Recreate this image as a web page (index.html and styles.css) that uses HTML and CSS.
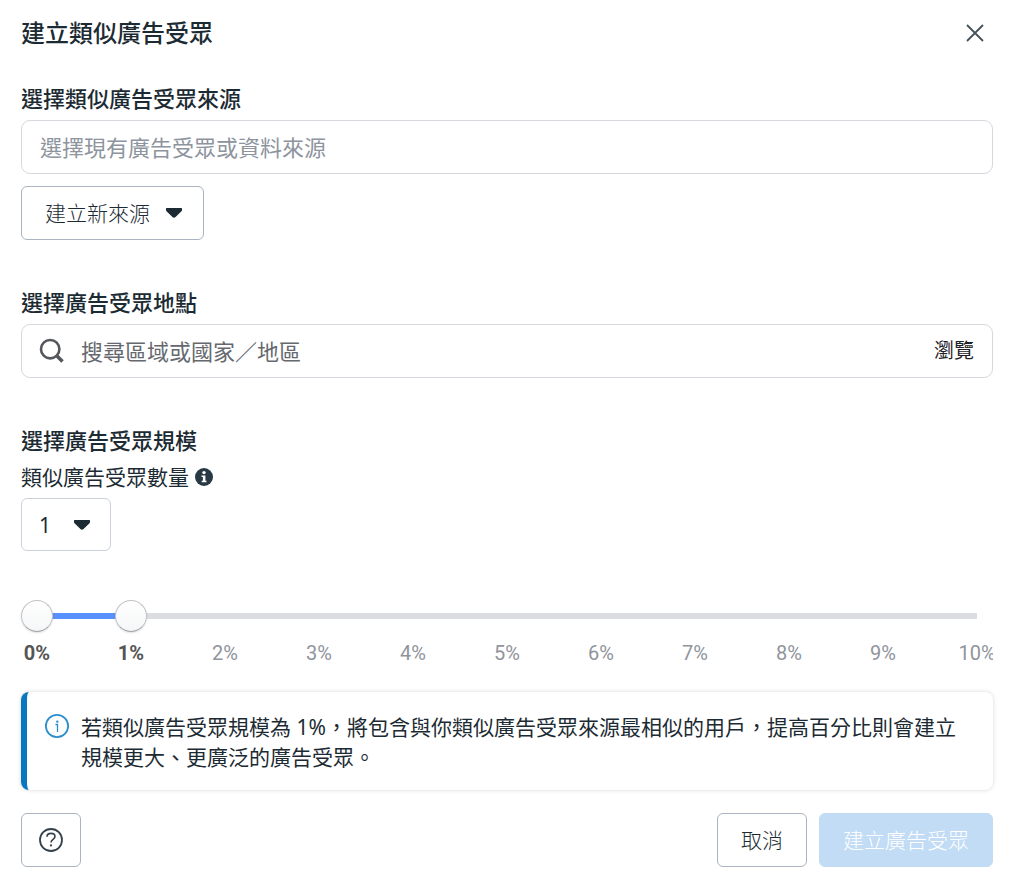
FILE: index.html
```html
<!DOCTYPE html>
<html lang="zh-Hant">
<head>
    <meta charset="UTF-8">
    <meta name="viewport" content="width=device-width, initial-scale=1.0">
    <title>建立類似廣告受眾</title>
    <link rel="stylesheet" href="styles.css">
</head>
<body>
    <form class="dialog">
        <header class="dialog-header">
            <h1>建立類似廣告受眾</h1>
            <button type="button" class="close-button" aria-label="關閉">
                <svg width="20" height="20" viewBox="0 0 20 20" fill="none" stroke="currentColor" stroke-width="1.8">
                    <path d="M2 2l16 16M18 2L2 18"/>
                </svg>
            </button>
        </header>

        <main>
            <section class="form-section">
                <h2><label for="source">選擇類似廣告受眾來源</label></h2>
                <div class="field">
                    <input type="text" id="source" name="source" placeholder="選擇現有廣告受眾或資料來源">
                </div>
                <button type="button" class="button source-button">
                    建立新來源
                    <svg class="caret" width="16" height="10" viewBox="0 0 16 10" fill="currentColor">
                        <path d="M.8 0h14.4c.6 0 .8.4.8 1v1c0 .7-.3 1.2-.8 1.6L9.6 9c-.9.9-2.3.9-3.2 0L.8 3.6C.3 3.2 0 2.7 0 2V1c0-.6.2-1 .8-1z"/>
                    </svg>
                </button>
            </section>

            <section class="form-section">
                <h2><label for="location">選擇廣告受眾地點</label></h2>
                <div class="field search-field">
                    <svg width="26" height="26" viewBox="0 0 26 26" fill="none" stroke="currentColor">
                        <circle cx="11.2" cy="11.2" r="9.2" stroke-width="2.6"/>
                        <path d="M17.5 17.5l6 6" stroke-width="3.6"/>
                    </svg>
                    <input type="text" id="location" name="location" placeholder="搜尋區域或國家／地區">
                    <button type="button" class="browse-button">瀏覽</button>
                </div>
            </section>

            <section class="form-section">
                <h2>選擇廣告受眾規模</h2>
                <div class="count-label">
                    <label for="count">類似廣告受眾數量</label>
                    <svg width="18" height="18" viewBox="0 0 18 18">
                        <circle cx="9" cy="9" r="9" fill="#283943"/>
                        <circle cx="9" cy="4.6" r="1.7" fill="#fff"/>
                        <path d="M6.5 7.4h3.9v5.3h1.1v1.6H6.7v-1.6h1.2V9H6.5z" fill="#fff"/>
                    </svg>
                </div>
                <div class="count-select">
                    <select id="count" name="count">
                        <option selected>1</option>
                        <option>2</option>
                        <option>3</option>
                        <option>4</option>
                        <option>5</option>
                        <option>6</option>
                    </select>
                    <svg class="caret" width="16" height="10" viewBox="0 0 16 10" fill="currentColor">
                        <path d="M.8 0h14.4c.6 0 .8.4.8 1v1c0 .7-.3 1.2-.8 1.6L9.6 9c-.9.9-2.3.9-3.2 0L.8 3.6C.3 3.2 0 2.7 0 2V1c0-.6.2-1 .8-1z"/>
                    </svg>
                </div>

                <div class="slider">
                    <div class="slider-track">
                        <div class="slider-fill" style="width: 10%"></div>
                    </div>
                    <input type="range" min="0" max="10" value="0" aria-label="受眾規模下限">
                    <input type="range" min="0" max="10" value="1" aria-label="受眾規模上限">
                </div>
                <ul class="slider-labels">
                    <li class="active">0%</li>
                    <li class="active">1%</li>
                    <li>2%</li>
                    <li>3%</li>
                    <li>4%</li>
                    <li>5%</li>
                    <li>6%</li>
                    <li>7%</li>
                    <li>8%</li>
                    <li>9%</li>
                    <li>10%</li>
                </ul>
            </section>

            <div class="notice">
                <svg width="24" height="24" viewBox="0 0 24 24" fill="none" stroke="#2c8dcc">
                    <circle cx="12" cy="12" r="11.1" stroke-width="1.8"/>
                    <path d="M10.5 10.5h2V18" stroke-width="1.3"/>
                    <circle cx="12.3" cy="7.6" r="1.2" fill="#2c8dcc" stroke="none"/>
                </svg>
                <p>若類似廣告受眾規模為 1%，將包含與你類似廣告受眾來源最相似的用戶，提高百分比則會建立規模更大、更廣泛的廣告受眾。</p>
            </div>
        </main>

        <footer class="dialog-footer">
            <button type="button" class="button help-button" aria-label="說明">
                <svg width="24" height="24" viewBox="0 0 24 24" fill="none" stroke="currentColor">
                    <circle cx="12" cy="12" r="11" stroke-width="1.8"/>
                    <path d="M8 8.8c0-2 1.7-3.4 4-3.4s4 1.3 4 3.2c0 2.7-4 2.8-4 5.8" stroke-width="1.6"/>
                    <circle cx="12" cy="17.4" r="1.1" fill="currentColor" stroke="none"/>
                </svg>
            </button>
            <button type="button" class="button cancel-button">取消</button>
            <button type="submit" class="button submit-button" disabled>建立廣告受眾</button>
        </footer>
    </form>
</body>
</html>
```
FILE: styles.css
```css
* {
    box-sizing: border-box;
}

body {
    margin: 0;
    background-color: #fff;
    color: #1c2b33;
    font-family: "Noto Sans", "Noto Sans CJK TC", sans-serif;
    font-size: 21px;
    line-height: 30px;
}

input,
select,
button {
    font: inherit;
    color: inherit;
}

button {
    cursor: pointer;
}

h1,
h2,
p,
ul {
    margin: 0;
    padding: 0;
}

svg {
    display: block;
    flex: none;
}

.dialog {
    padding: 0 22px 21px 21px;
}

/* Header */
.dialog-header {
    display: flex;
    align-items: center;
    justify-content: space-between;
    height: 66px;
    margin-bottom: 17px;
}

.dialog-header h1 {
    font-size: 24px;
    font-weight: 500;
}

.close-button {
    padding: 8px;
    border: none;
    background: none;
    color: #44515a;
}

/* Sections */
.form-section {
    margin-bottom: 47px;
}

.form-section h2 {
    margin-bottom: 7px;
    font-size: 22px;
    font-weight: 500;
}

.field {
    display: flex;
    align-items: center;
    height: 54px;
    padding: 0 18px;
    border: 1px solid #d5d8dd;
    border-radius: 9px;
}

.field input {
    flex: 1;
    min-width: 0;
    padding: 0;
    border: none;
    outline: none;
    background: none;
    font-size: 22px;
}

.field input::placeholder {
    color: #8d949e;
    opacity: 1;
}

.search-field {
    gap: 16px;
    padding-left: 17px;
}

.search-field svg {
    color: #54585d;
}

.search-field input::placeholder {
    color: #65696f;
}

.browse-button {
    padding: 0;
    border: none;
    background: none;
    color: #1d2125;
    font-size: 20px;
}

/* Buttons */
.button {
    display: flex;
    align-items: center;
    justify-content: center;
    height: 54px;
    padding: 0 23px;
    border: 1px solid #a9b4c0;
    border-radius: 6px;
    background-color: #fff;
    font-weight: 300;
}

.source-button {
    gap: 16px;
    margin-top: 12px;
    padding-right: 21px;
}

/* Audience count */
.count-label {
    display: flex;
    align-items: center;
    gap: 6px;
    margin-bottom: 6px;
}

.count-select {
    display: grid;
    align-items: center;
    width: 90px;
}

.count-select select,
.count-select .caret {
    grid-area: 1 / 1;
}

.count-select select {
    height: 53px;
    padding: 0 17px;
    border: 1px solid #ccd0da;
    border-radius: 6px;
    background: none;
    appearance: none;
}

.count-select .caret {
    justify-self: end;
    margin-right: 21px;
    pointer-events: none;
}

/* Slider */
.slider {
    display: grid;
    align-items: center;
    margin-top: 49px;
}

.slider > * {
    grid-area: 1 / 1;
}

.slider-track {
    height: 6px;
    margin: 0 16px;
    background-color: #dcdce3;
}

.slider-fill {
    height: 100%;
    background-color: #5890ff;
}

.slider input {
    width: 100%;
    height: 32px;
    margin: 0;
    background: none;
    appearance: none;
    pointer-events: none;
}

.slider input::-webkit-slider-thumb {
    width: 32px;
    height: 32px;
    border: 1px solid #c0c2c6;
    border-bottom-color: #a3a6aa;
    border-radius: 50%;
    background: linear-gradient(#fff, #f5f6f7);
    box-shadow: 0 1px 2px rgba(0, 0, 0, 0.12);
    appearance: none;
    pointer-events: auto;
}

.slider-labels {
    display: flex;
    justify-content: space-between;
    margin-top: 6px;
    overflow: hidden;
    color: #90949c;
    font-family: Roboto, sans-serif;
    font-size: 20px;
    list-style: none;
}

.slider-labels li {
    display: flex;
    justify-content: center;
    width: 32px;
}

.slider-labels .active {
    color: #555;
    font-weight: 700;
}

/* Notice */
.notice {
    display: flex;
    gap: 12px;
    margin-top: -23px;
    padding: 20px 32px 18px 18px;
    border-left: 6px solid #0a78be;
    border-radius: 8px;
    box-shadow: 0 0 4px rgba(0, 0, 0, 0.16);
}

.notice svg {
    margin-top: 2px;
}

/* Footer */
.dialog-footer {
    display: flex;
    gap: 12px;
    margin-top: 23px;
}

.help-button {
    width: 60px;
    margin-right: auto;
    padding: 0;
    color: #35424b;
}

.submit-button {
    border-color: #c2dcf5;
    background-color: #c2dcf5;
    color: #fff;
    cursor: default;
}
```
